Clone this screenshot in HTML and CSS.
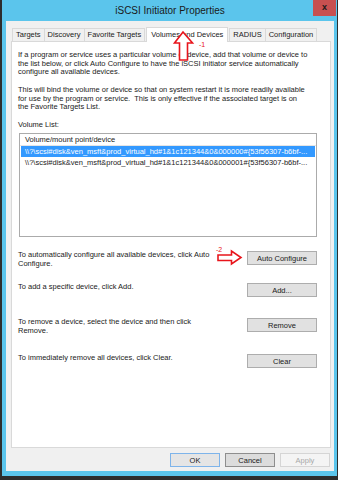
FILE: index.html
```html
<!DOCTYPE html>
<html lang="en">
	<head>
		<meta charset="UTF-8" />
		<meta name="viewport" content="width=device-width, initial-scale=1.0" />
		<title>iSCSI Initiator Properties</title>
		<link rel="stylesheet" href="styles.css">
	</head>
	<body>
		<div class="window">
			<div class="titlebar">
				<span></span>
				<h1 class="title">iSCSI Initiator Properties</h1>
				<span class="close">x</span>
			</div>

			<div class="dialog">
				<div class="tabs">
					<span class="tab">Targets</span>
					<span class="tab">Discovery</span>
					<span class="tab">Favorite Targets</span>
					<span class="tab active">Volumes and Devices</span>
					<span class="tab">RADIUS</span>
					<span class="tab">Configuration</span>
				</div>

				<div class="panel">
					<p>If a program or service uses a particular volume or device, add that volume or device to<br>the list below, or click Auto Configure to have the iSCSI initiator service automatically<br>configure all available devices.</p>
					<p>This will bind the volume or device so that on system restart it is more readily available<br>for use by the program or service.&nbsp; This is only effective if the associated target is on<br>the Favorite Targets List.</p>

					<label class="list-label">Volume List:</label>
					<div class="list">
						<div class="list-head">Volume/mount point/device</div>
						<div class="list-row selected">\\?\scsi#disk&amp;ven_msft&amp;prod_virtual_hd#1&amp;1c121344&amp;0&amp;000000#{53f56307-b6bf-...</div>
						<div class="list-row">\\?\scsi#disk&amp;ven_msft&amp;prod_virtual_hd#1&amp;1c121344&amp;0&amp;000001#{53f56307-b6bf-...</div>
					</div>

					<div class="actions">
						<p>To automatically configure all available devices, click Auto<br>Configure.</p>
						<button class="btn">Auto Configure</button>
						<p>To add a specific device, click Add.</p>
						<button class="btn">Add...</button>
						<p>To remove a device, select the device and then click<br>Remove.</p>
						<button class="btn">Remove</button>
						<p>To immediately remove all devices, click Clear.</p>
						<button class="btn">Clear</button>
					</div>
				</div>

				<div class="footer">
					<button class="btn btn-default">OK</button>
					<button class="btn btn-cancel">Cancel</button>
					<button class="btn btn-disabled">Apply</button>
				</div>
			</div>

			<!-- annotation marks drawn over the screenshot -->
			<svg class="marks" width="335" height="476" viewBox="0 0 335 476">
				<polygon points="181,32 190.5,43 185.5,43 185.5,60 177.5,60 177.5,43 172.5,43" fill="#fff" stroke="#e8141b" stroke-width="1.6" stroke-linejoin="miter" />
				<text x="197" y="47" class="mark-text">-1</text>
				<polygon points="216,255 229.5,255 229.5,251 239,257.5 229.5,264 229.5,260.5 216,260.5" fill="#fff" stroke="#e8141b" stroke-width="1.6" />
				<text x="214" y="252" class="mark-text">-2</text>
			</svg>
		</div>
	</body>
</html>
```

FILE: styles.css
```css
body {
	margin: 0;
	background-color: #2d2d2d;
	font-family: "Liberation Sans", Arial, sans-serif;
	font-size: 7.5px;
	color: #1a1a1a;
}
.window {
	position: relative;
	width: 335px;
	height: 476px;
	margin-left: 2px;
	padding: 0 3px 5px 4px;
	box-sizing: border-box;
	background-color: #5bc5ec;
}
.titlebar {
	display: grid;
	grid-template-columns: 1fr auto 1fr;
	align-items: start;
	height: 21px;
}
.title {
	margin: 0;
	padding-top: 5px;
	font-size: 10px;
	font-weight: normal;
	color: #1a1a1a;
	line-height: 12px;
}
.close {
	justify-self: end;
	width: 23px;
	height: 16px;
	margin-right: -2px;
	background-color: #c75050;
	text-align: center;
	font-size: 9px;
	font-weight: bold;
	line-height: 14px;
	color: #1a1a1a;
}
.dialog {
	height: 450px;
	padding-top: 6px;
	box-sizing: border-box;
	background-color: #f0f0f0;
}
.tabs {
	display: flex;
	align-items: flex-end;
	margin-left: 6px;
	height: 14px;
}
.tab {
	height: 13px;
	padding: 0 3px;
	box-sizing: border-box;
	border: 1px solid #d9d9d9;
	border-bottom: none;
	margin-right: -1px;
	background-color: #f0f0f0;
	line-height: 12px;
	white-space: nowrap;
}
.tab.active {
	position: relative;
	z-index: 1;
	height: 15px;
	margin: 0 1px -1px 2px;
	padding: 0 4px;
	background-color: #fff;
	line-height: 13px;
}
.panel {
	height: 407px;
	margin: 0 3px 0 5px;
	padding: 9px 13px 0 6px;
	box-sizing: border-box;
	border: 1px solid #d9d9d9;
	background-color: #fff;
}
.panel p {
	margin: 0 0 9.5px;
	line-height: 8.5px;
	white-space: nowrap;
}
.list-label {
	display: block;
	line-height: 8.5px;
	margin-bottom: 3.5px;
}
.list {
	height: 104px;
	margin-left: 1px;
	box-sizing: border-box;
	border: 1px solid #ababab;
	background-color: #fff;
}
.list-head {
	height: 12px;
	padding-left: 5px;
	box-sizing: border-box;
	border-bottom: 1px solid #e5e5e5;
	line-height: 11px;
}
.list-row {
	height: 11px;
	margin: 0 1px;
	padding-left: 4px;
	line-height: 11px;
	white-space: nowrap;
	overflow: hidden;
}
.list-row.selected {
	background-color: #3399ff;
	color: #fff;
}
.actions {
	display: grid;
	grid-template-columns: 1fr 70px;
	grid-template-rows: 32px 35px 36px auto;
	margin-top: 14px;
}
.actions p {
	margin: 0;
}
.btn {
	height: 14px;
	padding: 0;
	font-family: inherit;
	font-size: 7.5px;
	color: #1a1a1a;
	background-color: #e1e1e1;
	border: 1px solid #adadad;
	border-radius: 0;
}
.footer {
	display: flex;
	justify-content: flex-end;
	gap: 5px;
	margin-top: 5px;
	padding-right: 4px;
}
.footer .btn {
	width: 50px;
}
.btn-default {
	border-color: #7eb4ea;
	background-color: #e5e5e5;
}
.btn-cancel {
	background-color: #dcdcdc;
	border-color: #8e8e8e;
}
.btn-disabled {
	color: #a8a8a8;
	background-color: #f4f4f4;
	border-color: #d5d5d5;
}
.marks {
	position: absolute;
	left: 0;
	top: 0;
	z-index: 2;
	pointer-events: none;
}
.mark-text {
	font-family: "Liberation Sans", Arial, sans-serif;
	font-size: 7px;
	fill: #e8141b;
}
```
